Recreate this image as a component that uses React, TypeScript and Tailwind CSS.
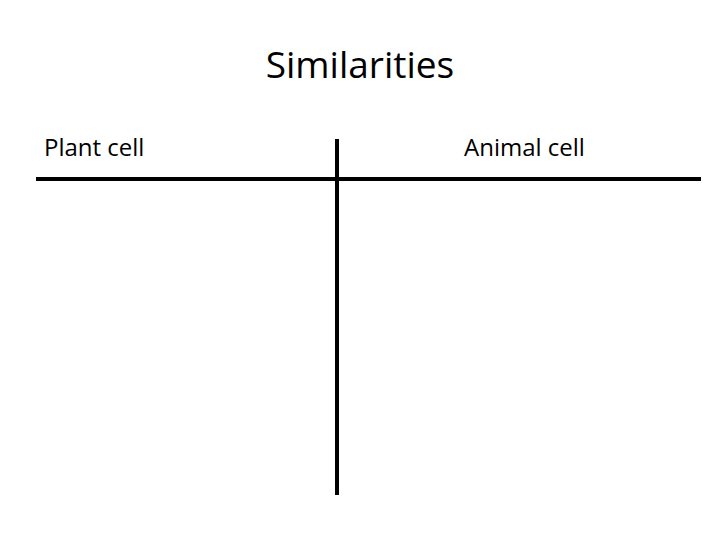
export default function App() {
  return (
    <div className="w-[720px] h-[540px] bg-white text-black font-['Open_Sans',sans-serif] overflow-hidden">
      {/* Title */}
      <h1 className="pt-[40px] h-[139px] text-center text-[37px] leading-[48px]">Similarities</h1>

      {/* T-chart */}
      <div className="flex ml-[36px]">
        <div className="w-[299px] h-[42px] border-b-4 border-black pl-[8px] text-[24px] leading-[16px]">
          Plant cell
        </div>
        <div className="w-[4px] h-[356px] bg-black" />
        <div className="w-[362px] h-[42px] border-b-4 border-black pl-[125px] text-[24px] leading-[16px]">
          Animal cell
        </div>
      </div>
    </div>
  );
}
